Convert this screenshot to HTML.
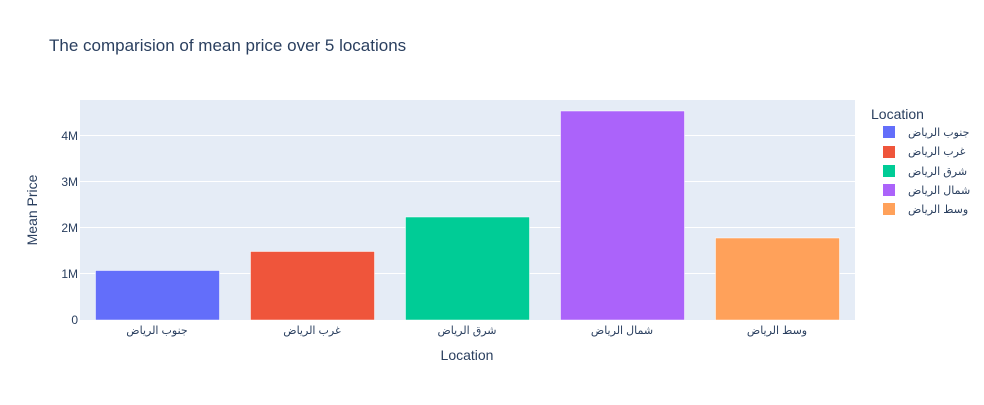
<!DOCTYPE html>
<html><head><meta charset="utf-8"><style>
body{margin:0;background:#fff}
svg text{font-family:"Liberation Sans","DejaVu Sans",sans-serif;fill:#2a3f5f}
</style></head><body>
<svg width="984" height="400" xmlns="http://www.w3.org/2000/svg">
<rect width="984" height="400" fill="#fff"/>
<rect x="80" y="100" width="775" height="220" fill="#e5ecf6"/>
<g stroke="#fff" stroke-width="1">
<line x1="80" x2="855" y1="273.5" y2="273.5"/>
<line x1="80" x2="855" y1="227.5" y2="227.5"/>
<line x1="80" x2="855" y1="181.5" y2="181.5"/>
<line x1="80" x2="855" y1="135.5" y2="135.5"/>
</g>
<g stroke="#fff" stroke-width="0.5">
<rect x="95.5" y="270.5" width="124" height="49.5" fill="#636efa"/>
<rect x="250.5" y="251.5" width="124" height="68.5" fill="#ef553b"/>
<rect x="405.5" y="217" width="124" height="103" fill="#00cc96"/>
<rect x="560.5" y="111" width="124" height="209" fill="#ab63fa"/>
<rect x="715.5" y="238" width="124" height="82" fill="#ffa15a"/>
</g>
<text x="49" y="51" font-size="17">The comparision of mean price over 5 locations</text>
<g font-size="12" text-anchor="end">
<text x="78" y="324">0</text>
<text x="78" y="278">1M</text>
<text x="78" y="232">2M</text>
<text x="78" y="186">3M</text>
<text x="78" y="140">4M</text>
</g>
<g font-size="11" text-anchor="middle">
<text x="157" y="334" direction="rtl">جنوب الرياض</text>
<text x="312" y="334" direction="rtl">غرب الرياض</text>
<text x="467" y="334" direction="rtl">شرق الرياض</text>
<text x="622" y="334" direction="rtl">شمال الرياض</text>
<text x="777" y="334" direction="rtl">وسط الرياض</text>
</g>
<text x="467" y="360" font-size="14" text-anchor="middle">Location</text>
<text transform="translate(37,210) rotate(-90)" font-size="14" text-anchor="middle">Mean Price</text>
<text x="871" y="119" font-size="14">Location</text>
<rect x="883" y="126" width="12" height="12" fill="#636efa"/>
<rect x="883" y="146" width="12" height="12" fill="#ef553b"/>
<rect x="883" y="165" width="12" height="12" fill="#00cc96"/>
<rect x="883" y="184" width="12" height="12" fill="#ab63fa"/>
<rect x="883" y="203" width="12" height="12" fill="#ffa15a"/>
<g font-size="11" text-anchor="start">
<text x="908" y="136">جنوب الرياض</text>
<text x="908" y="155">غرب الرياض</text>
<text x="908" y="175">شرق الرياض</text>
<text x="908" y="194">شمال الرياض</text>
<text x="908" y="213">وسط الرياض</text>
</g>
</svg>
</body></html>
